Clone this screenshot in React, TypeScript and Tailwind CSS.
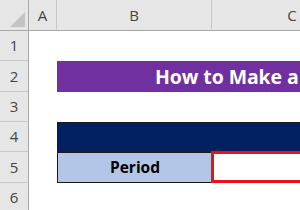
import React from "react";

const hdr = "bg-[#e6e6e6] text-[#444444] flex items-center justify-center text-[15px]";

export default function App() {
  return (
    <div
      className="w-[300px] h-[210px] overflow-hidden bg-white"
      style={{ fontFamily: '"Open Sans", "Liberation Sans", sans-serif' }}
    >
      <div className="grid grid-cols-[29px_28px_155px_160px] grid-rows-[31px_30px_31px_30px_30px_31px_30px]">
        {/* header row */}
        <div className="bg-[#e6e6e6] border-r border-b border-[#a8a8a8] relative">
          <div className="absolute right-[3px] bottom-[3px] w-0 h-0 border-l-[15px] border-l-transparent border-b-[15px] border-b-[#c4c4c4]" />
        </div>
        <div className={`${hdr} border-r border-r-[#c8c8c8] border-b border-b-[#a8a8a8]`}>A</div>
        <div className={`${hdr} border-r border-r-[#c8c8c8] border-b border-b-[#a8a8a8]`}>B</div>
        <div className={`${hdr} border-b border-b-[#a8a8a8]`}>C</div>

        {/* row 1 */}
        <div className={`${hdr} border-r border-r-[#a8a8a8] border-b border-b-[#c8c8c8]`}>1</div>
        <div />
        <div />
        <div />

        {/* row 2 */}
        <div className={`${hdr} border-r border-r-[#a8a8a8] border-b border-b-[#c8c8c8]`}>2</div>
        <div />
        <div className="col-span-2 bg-[#7030a0] flex items-center pl-[98px] overflow-hidden whitespace-nowrap">
          <span className="text-white font-bold text-[19.5px] leading-none tracking-[-0.1px]">How to Make a Timeline</span>
        </div>

        {/* row 3 */}
        <div className={`${hdr} border-r border-r-[#a8a8a8] border-b border-b-[#c8c8c8]`}>3</div>
        <div />
        <div />
        <div />

        {/* row 4 */}
        <div className={`${hdr} border-r border-r-[#a8a8a8] border-b border-b-[#c8c8c8]`}>4</div>
        <div />
        <div className="col-span-2 bg-[#002060] border-l border-t border-[#1a1a1a]" />

        {/* row 5 */}
        <div className={`${hdr} border-r border-r-[#a8a8a8] border-b border-b-[#c8c8c8]`}>5</div>
        <div />
        <div className="bg-[#b4c6e7] border-l border-b border-t border-[#1a1a1a] flex items-center justify-center">
          <span className="font-bold text-[15.5px] text-black">Period</span>
        </div>
        <div className="relative border-b border-[#1a1a1a]">
          <div className="absolute -left-[1px] -top-[1px] -bottom-[1px] right-0 border-[3px] border-[#ee1111] bg-white" />
        </div>

        {/* row 6 */}
        <div className={`${hdr} border-r border-r-[#a8a8a8] border-b border-b-[#c8c8c8]`}>6</div>
        <div />
        <div />
        <div />
      </div>
    </div>
  );
}
